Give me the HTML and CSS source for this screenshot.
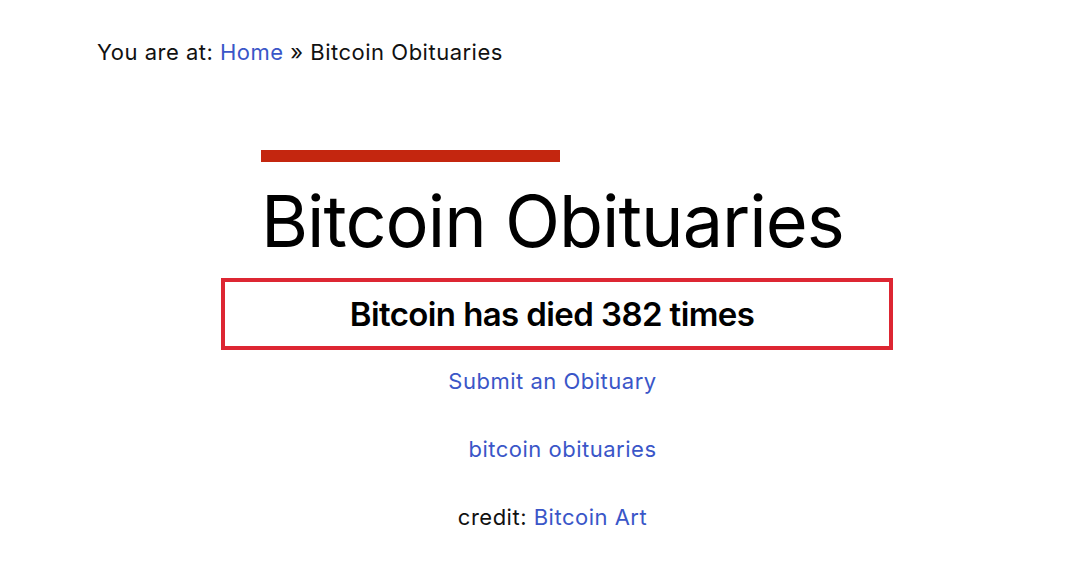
FILE: index.html
```html
<!DOCTYPE html>
<html lang="en">
<head>
  <meta charset="UTF-8">
  <meta name="viewport" content="width=device-width, initial-scale=1">
  <title>Bitcoin Obituaries</title>
  <link rel="stylesheet" href="styles.css">
</head>
<body>
  <div class="breadcrumbs">
    You are at: <a href="#">Home</a> &raquo; Bitcoin Obituaries
  </div>

  <div class="content">
    <div class="page-title">
      <div class="title-bar"></div>
      <h1>Bitcoin Obituaries</h1>
    </div>

    <div class="death-count">
      <p>Bitcoin has died 382 times</p>
    </div>

    <p class="link-row"><a href="#">Submit an Obituary</a></p>
    <p class="link-row logo-alt"><a href="#">bitcoin obituaries</a></p>
    <p class="link-row">credit: <a href="#">Bitcoin Art</a></p>
  </div>
</body>
</html>
```

FILE: styles.css
```css
body {
  font-family: 'Inter', 'Open Sans', sans-serif;
  margin: 0;
  background: #ffffff;
  color: #111111;
}

a {
  color: #3a56c8;
  text-decoration: none;
}

.breadcrumbs {
  padding: 37px 0 0 97px;
  font-size: 22px;
  line-height: 30px;
  letter-spacing: 0.5px;
}

.content {
  width: 672px;
  margin: 0 0 0 221px;
  padding-top: 83px;
}

.page-title {
  padding-left: 40px;
}

.title-bar {
  width: 299px;
  height: 12px;
  background: #c4260f;
}

h1 {
  margin: 14px 0 0;
  font-size: 72px;
  font-weight: 400;
  line-height: 90px;
  letter-spacing: -1px;
  color: #000000;
}

/* counter box, text sits a little left of centre */
.death-count {
  margin-top: 12px;
  border: 4px solid #dd2632;
  height: 64px;
  padding-right: 10px;
  display: flex;
  align-items: center;
  justify-content: center;
}

.death-count p {
  margin: 0;
  font-size: 33px;
  font-weight: 600;
  letter-spacing: -0.6px;
  color: #000000;
}

.link-row {
  margin: 0;
  padding: 16px 9px 0 0;
  height: 52px;
  text-align: center;
  font-size: 22px;
  line-height: 30px;
  letter-spacing: 0.5px;
}

.logo-alt {
  padding-left: 20px;
}
```
